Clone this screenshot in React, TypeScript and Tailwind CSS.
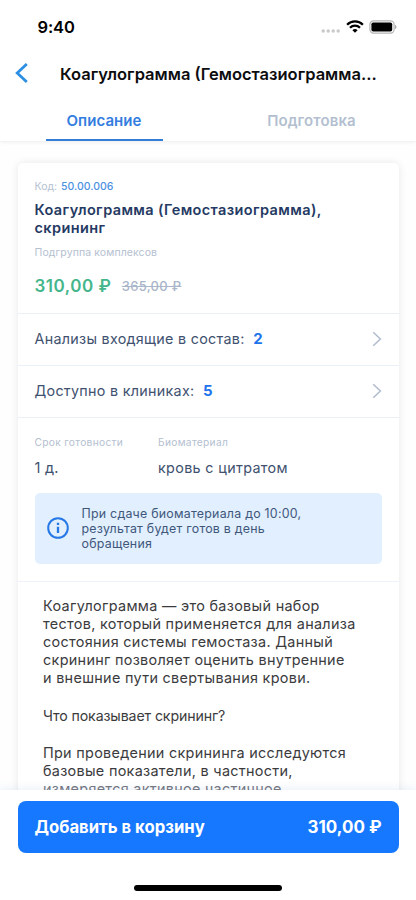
import React from "react";

function StatusBar() {
  return (
    <div className="flex h-[50px] items-start justify-between pt-[17px] pr-[19px] pl-[37.5px]">
      <span className="text-[16.5px] leading-[20px] font-semibold tracking-[-0.1px] text-black">9:40</span>
      <div className="flex h-[19px] items-center">
        <svg width="20" height="14" viewBox="0 0 20 14" fill="#c9c9cb" className="mt-[3px]">
          <circle cx="2.2" cy="10" r="1.7" />
          <circle cx="7.2" cy="10" r="1.7" />
          <circle cx="12.2" cy="10" r="1.7" />
          <circle cx="17.2" cy="10" r="1.7" />
        </svg>
        <svg width="18" height="13" viewBox="0 0 18 13" className="ml-[5px]" fill="none" stroke="#000" strokeWidth="2.3">
          <path d="M1.1 4.7a11.2 11.2 0 0 1 15.8 0" />
          <path d="M4 7.7a7.1 7.1 0 0 1 10 0" />
          <path d="M9 12.8L6.4 10.2a3.7 3.7 0 0 1 5.2 0Z" fill="#000" stroke="none" />
        </svg>
        <svg width="28" height="14" viewBox="0 0 28 14" className="ml-[5px]">
          <rect x="0.9" y="0.9" width="24.2" height="12.2" rx="3.6" fill="#fff" stroke="#b5b5b5" strokeWidth="1.2" />
          <rect x="2.4" y="2.4" width="20.8" height="9.2" rx="1.8" fill="#000" />
          <path d="M26.2 5v4c.8-.3 1.2-1.1 1.2-2s-.4-1.7-1.2-2Z" fill="#999" />
        </svg>
      </div>
    </div>
  );
}

function Chevron() {
  return (
    <svg width="10" height="16" viewBox="0 0 10 16" fill="none" stroke="#b0bccd" strokeWidth="1.5">
      <path d="M1.2 1.2L8.4 8L1.2 14.8" />
    </svg>
  );
}

function LinkRow({ label, count }: { label: string; count: string }) {
  return (
    <div className="flex h-[52px] items-center justify-between border-t-[1.5px] border-[#e9f0f8] px-[17px]">
      <div className="flex items-center gap-[8.5px]">
        <span className="text-[14.3px] tracking-[0.3px] text-[#40516f]">{label}</span>
        <span className="text-[15px] font-bold text-[#1f74ec]">{count}</span>
      </div>
      <Chevron />
    </div>
  );
}

export default function App() {
  return (
    <div className="flex h-[900px] w-[416px] flex-col overflow-hidden bg-[#fefefe] font-['Inter','Liberation_Sans',sans-serif] whitespace-nowrap">
      <header className="relative z-10 h-[141px] shrink-0 bg-white shadow-[0_1px_4px_rgba(0,0,0,0.08)]">
        <StatusBar />
        <div className="flex h-[48px] items-center">
          <svg width="14" height="22" viewBox="0 0 14 22" className="mb-[2px] ml-[15px]" fill="none" stroke="#2d8fe3" strokeWidth="2.8">
            <path d="M11.8 2L2.2 11L11.8 20" />
          </svg>
          <h1 className="mt-[1px] ml-[31px] text-[16.5px] font-semibold text-[#0d0d0f]">Коагулограмма (Гемостазиограмма...</h1>
        </div>
        <div className="flex h-[43px] text-[15px] font-semibold">
          <div className="flex w-[208px] justify-center">
            <div className="flex w-[117px] justify-center border-b-2 border-[#347dd6] pt-[12px] leading-[22px] tracking-[0.05px] text-[#347de0]">Описание</div>
          </div>
          <div className="flex w-[207px] justify-center pt-[12px] leading-[22px] tracking-[0.1px] text-[#b3bfd0]">Подготовка</div>
        </div>
      </header>

      <main className="h-[649px] shrink-0 overflow-hidden px-[17.5px] pt-[21.5px]">
        <article className="h-[700px] rounded-[5px] bg-white shadow-[0_0_8px_rgba(0,0,0,0.09)]">
          <section className="h-[150px] px-[17px] pt-[17px]">
            <div className="flex gap-[4px] text-[10.5px] leading-[14px]">
              <span className="text-[#b4c0d0]">Код:</span>
              <span className="font-medium text-[#4c91e2]">50.00.006</span>
            </div>
            <h2 className="mt-[7.5px] text-[14.5px] leading-[18px] font-semibold tracking-[0.38px] text-[#253a63]">
              Коагулограмма (Гемостазиограмма),
              <br />
              скрининг
            </h2>
            <p className="mt-[9px] text-[10.5px] leading-[14px] tracking-[0.1px] text-[#b4c0d0]">Подгруппа комплексов</p>
            <div className="mt-[16px] flex items-center gap-[10.5px] leading-[20px]">
              <span className="text-[17px] font-semibold tracking-[0.5px] text-[#45b68c]">310,00 ₽</span>
              <span className="text-[13px] font-medium tracking-[0.3px] text-[#a9b5c8] line-through">365,00 ₽</span>
            </div>
          </section>

          <LinkRow label="Анализы входящие в состав:" count="2" />
          <LinkRow label="Доступно в клиниках:" count="5" />

          <section className="h-[164px] border-t-[1.5px] border-[#e9f0f8] px-[17px] pt-[17px]">
            <div className="flex">
              <div className="w-[123.5px]">
                <div className="text-[10.2px] leading-[14px] tracking-[0.32px] text-[#b4c0d0]">Срок готовности</div>
                <div className="mt-[9px] text-[14.5px] leading-[20px] tracking-[0.2px] text-[#40516f]">1 д.</div>
              </div>
              <div>
                <div className="text-[10.2px] leading-[14px] tracking-[0.32px] text-[#b4c0d0]">Биоматериал</div>
                <div className="mt-[9px] text-[14.3px] leading-[20px] tracking-[0.36px] text-[#40516f]">кровь с цитратом</div>
              </div>
            </div>
            <div className="mt-[15.5px] flex h-[70.5px] items-center rounded-[5px] bg-[#e1efff] pl-[12px]">
              <svg width="22" height="22" viewBox="0 0 22 22" fill="none" stroke="#2578e5" strokeWidth="2">
                <circle cx="11" cy="11" r="9.8" />
                <path d="M11 9.7V16M11 5.8V8" strokeWidth="2.3" />
              </svg>
              <p className="ml-[13px] text-[12.4px] leading-[15px] tracking-[0.24px] text-[#40577b]">
                При сдаче биоматериала до 10:00,
                <br />
                результат будет готов в день
                <br />
                обращения
              </p>
            </div>
          </section>

          <section className="border-t-[1.5px] border-[#eef2fa] pt-[15.5px] pl-[25.5px] text-[14.4px] leading-[18.1px] text-[#3b3b3e]">
            <p className="tracking-[0.31px]">
              Коагулограмма — это базовый набор
              <br />
              тестов, который применяется для анализа
              <br />
              состояния системы гемостаза. Данный
              <br />
              скрининг позволяет оценить внутренние
              <br />
              и внешние пути свертывания крови.
            </p>
            <p className="mt-[20px] text-[14.2px] tracking-[-0.13px]">Что показывает скрининг?</p>
            <p className="mt-[18px] tracking-[0.3px]">
              При проведении скрининга исследуются
              <br />
              базовые показатели, в частности,
              <br />
              <span className="text-[#777780]">измеряется активное частичное</span>
            </p>
          </section>
        </article>
      </main>

      <footer className="relative z-10 flex h-[110px] shrink-0 flex-col items-center bg-white pt-[11px] shadow-[0_-2px_8px_rgba(65,125,210,0.1)]">
        <button className="flex h-[51.5px] w-[381px] items-center justify-between rounded-[8px] bg-[#1678ff] px-[17px] pt-[2px] text-[17px] font-bold text-white">
          <span className="text-[16.7px]">Добавить в корзину</span>
          <span>310,00 ₽</span>
        </button>
        <div className="mt-[32.5px] h-[6px] w-[148px] rounded-full bg-black" />
      </footer>
    </div>
  );
}
